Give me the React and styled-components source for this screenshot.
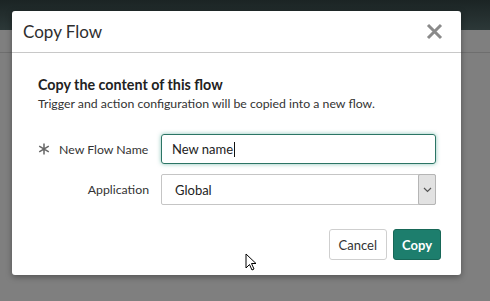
import React from 'react';
import styled, { createGlobalStyle } from 'styled-components';

const Global = createGlobalStyle`
  html, body { margin: 0; padding: 0; }
  body {
    width: 490px;
    height: 301px;
    overflow: hidden;
    background: #7f7f7f;
    font-family: Lato, "Open Sans", sans-serif;
  }
`;

const Backdrop = styled.div`
  position: relative;
  width: 490px;
  height: 301px;
  display: flex;
  flex-direction: column;
`;

const TopBar = styled.div`
  height: 30px;
  background: linear-gradient(#1b2424, #2c3838);
`;

const SubBar = styled.div`
  height: 22px;
  border-bottom: 1px solid #6e6e6e;
`;

const Dialog = styled.div`
  position: absolute;
  left: 12px;
  top: 11px;
  width: 449px;
  height: 264px;
  background: #fff;
  border-radius: 3px;
  box-shadow: 0 2px 6px rgba(0, 0, 0, 0.35);
  display: flex;
  flex-direction: column;
`;

const Header = styled.div`
  height: 41px;
  display: flex;
  align-items: center;
  justify-content: space-between;
  padding: 0 18px 0 11px;
  border-bottom: 1px solid #c8c8c8;
`;

const Title = styled.h1`
  margin: 0;
  font-size: 17px;
  font-weight: 400;
  color: #2e2e2e;
`;

const Close = styled.button`
  border: 0;
  background: none;
  padding: 0;
  width: 18px;
  height: 18px;
  display: flex;
  align-items: center;
  justify-content: center;
`;

const Body = styled.div`
  padding: 23px 0 0 26px;
  display: flex;
  flex-direction: column;
`;

const Heading = styled.div`
  font-size: 14.3px;
  font-weight: 700;
  color: #222;
`;

const Sub = styled.div`
  margin-top: 3px;
  font-size: 12.3px;
  color: #333;
`;

const Form = styled.div`
  margin-top: 23px;
  display: grid;
  grid-template-columns: 111px 275px;
  column-gap: 12px;
  row-gap: 10px;
  align-items: center;
`;

const Label = styled.label`
  display: flex;
  align-items: center;
  justify-content: ${p => (p.$required ? 'flex-start' : 'flex-end')};
  gap: 9px;
  font-size: 12.3px;
  color: #333;
`;

const Star = styled.svg`
  flex: none;
`;

const Input = styled.div`
  height: 30px;
  box-sizing: border-box;
  border: 1px solid #2c7565;
  border-radius: 3px;
  box-shadow: 0 0 4px rgba(40, 150, 125, 0.55);
  display: flex;
  align-items: center;
  padding-left: 10px;
  font-size: 13px;
  color: #222;
`;

const Caret = styled.span`
  display: inline-block;
  width: 1px;
  height: 15px;
  background: #111;
  margin-left: 1px;
`;

const Select = styled.div`
  height: 31px;
  box-sizing: border-box;
  border: 1px solid #c5c5c5;
  border-radius: 2px;
  display: flex;
  align-items: stretch;
  font-size: 13px;
  color: #222;
`;

const SelectValue = styled.div`
  flex: 1;
  display: flex;
  align-items: center;
  padding-left: 13px;
`;

const SelectArrow = styled.div`
  width: 16px;
  background: #e2e2e2;
  border: 1px solid #b5b5b5;
  border-radius: 2px;
  margin: -1px;
  display: flex;
  align-items: center;
  justify-content: center;
`;

const Footer = styled.div`
  margin-top: 24px;
  display: flex;
  justify-content: flex-end;
  gap: 6px;
  padding-right: 20px;
`;

const Button = styled.button`
  height: 31px;
  box-sizing: border-box;
  padding: 0 ${p => (p.$primary ? 8 : 9)}px;
  border-radius: 3px;
  font-family: inherit;
  font-size: 13px;
  font-weight: ${p => (p.$primary ? 700 : 400)};
  color: ${p => (p.$primary ? '#fff' : '#333')};
  background: ${p => (p.$primary ? '#1d7e6d' : '#fff')};
  border: 1px solid ${p => (p.$primary ? '#176757' : '#cfcfcf')};
`;

const Cursor = styled.svg`
  position: absolute;
  left: 245px;
  top: 253px;
`;

export default function App() {
  return (
    <>
      <Global />
      <Backdrop>
        <TopBar />
        <SubBar />
        <Dialog>
          <Header>
            <Title>Copy Flow</Title>
            <Close aria-label="Close">
              <svg width="17" height="17" viewBox="0 0 17 17">
                <path d="M2 2 L15 15 M15 2 L2 15" stroke="#8a8a8a" strokeWidth="3" />
              </svg>
            </Close>
          </Header>
          <Body>
            <Heading>Copy the content of this flow</Heading>
            <Sub>Trigger and action configuration will be copied into a new flow.</Sub>
            <Form>
              <Label $required>
                <Star width="12" height="12" viewBox="0 0 12 12">
                  <path
                    d="M6 0.5 V11.5 M1.2 3.2 L10.8 8.8 M10.8 3.2 L1.2 8.8"
                    stroke="#666"
                    strokeWidth="1.5"
                  />
                </Star>
                New Flow Name
              </Label>
              <Input>
                New name<Caret />
              </Input>
              <Label>Application</Label>
              <Select>
                <SelectValue>Global</SelectValue>
                <SelectArrow>
                  <svg width="9" height="6" viewBox="0 0 9 6">
                    <path d="M1 1 L4.5 4.5 L8 1" stroke="#555" strokeWidth="1.2" fill="none" />
                  </svg>
                </SelectArrow>
              </Select>
            </Form>
            <Footer>
              <Button>Cancel</Button>
              <Button $primary>Copy</Button>
            </Footer>
          </Body>
        </Dialog>
        <Cursor width="14" height="20" viewBox="0 0 14 20">
          <path d="M1 1 L1 15 L4.5 11.5 L7 17 L9 16 L6.5 10.5 L11 10.5 Z" fill="#fff" stroke="#000" strokeWidth="1" />
        </Cursor>
      </Backdrop>
    </>
  );
}
